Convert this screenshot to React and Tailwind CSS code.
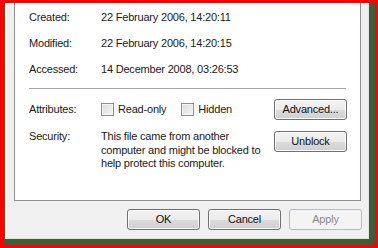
import React from "react";

function Btn({ children, disabled, className = "" }) {
  return (
    <div
      className={
        "flex h-[21px] w-[73px] items-center justify-center rounded-[3px] border text-[11px] tracking-[-0.2px] " +
        (disabled
          ? "border-[#b8bcc0] bg-[#f4f4f4] text-[#8a8a8a] "
          : "border-[#707070] bg-[linear-gradient(#f3f3f3_0%,#ececec_50%,#dcdcdc_51%,#cfcfcf_100%)] text-[#111] shadow-[inset_0_0_0_1px_#fbfbfb] ") +
        className
      }
    >
      {children}
    </div>
  );
}

function Check({ label }) {
  return (
    <div className="flex items-center">
      <div className="h-[13px] w-[13px] border border-[#8e8f8f] bg-[linear-gradient(135deg,#dcdcdc,#f5f5f5)] shadow-[inset_0_0_0_1px_#f4f4f4]" />
      <span className="ml-[4px]">{label}</span>
    </div>
  );
}

export default function App() {
  return (
    <div
      className="h-[248px] w-[378px] bg-[#ff0000] p-[3px] text-[11px] tracking-[-0.2px] text-[#1a1a1a]"
      style={{ fontFamily: '"Liberation Sans", Arial, sans-serif' }}
    >
      <div className="flex h-full flex-col rounded-b-[4px] border-b-[6px] border-l-[2px] border-r-[6px] border-[#3e5c38]">
        <div className="flex h-full flex-col border-b border-l border-r border-[#dfe6dc] bg-[#f0f0f0]">
          <div className="ml-[8px] mr-[7px] h-[198px] border-b border-l border-r border-[#8a8d92] bg-white pl-[14px]">
            <div className="mt-[7px] flex h-[15px] items-center">
              <span className="w-[72px]">Created:</span>
              <span>22 February 2006, 14:20:11</span>
            </div>
            <div className="mt-[11px] flex h-[15px] items-center">
              <span className="w-[72px]">Modified:</span>
              <span>22 February 2006, 14:20:15</span>
            </div>
            <div className="mt-[11px] flex h-[15px] items-center">
              <span className="w-[72px]">Accessed:</span>
              <span>14 December 2008, 03:26:53</span>
            </div>
            <div className="mt-[11px] h-px w-[317px] bg-[#a5a5a5]" />
            <div className="mt-[10px] flex h-[21px] items-center">
              <span className="w-[72px]">Attributes:</span>
              <Check label="Read-only" />
              <div className="ml-[15px]">
                <Check label="Hidden" />
              </div>
              <Btn className="ml-auto mr-[13px]">Advanced...</Btn>
            </div>
            <div className="mt-[11px] flex">
              <span className="mt-[-1px] w-[72px] leading-[13.5px]">Security:</span>
              <span className="mt-[-1px] w-[168px] leading-[13.5px]">
                This file came from another computer and might be blocked to help protect this computer.
              </span>
              <Btn className="ml-auto mr-[13px]">Unblock</Btn>
            </div>
          </div>
          <div className="mr-[6px] mt-[8px] flex justify-end gap-[8px]">
            <Btn>OK</Btn>
            <Btn>Cancel</Btn>
            <Btn disabled>Apply</Btn>
          </div>
        </div>
      </div>
    </div>
  );
}
